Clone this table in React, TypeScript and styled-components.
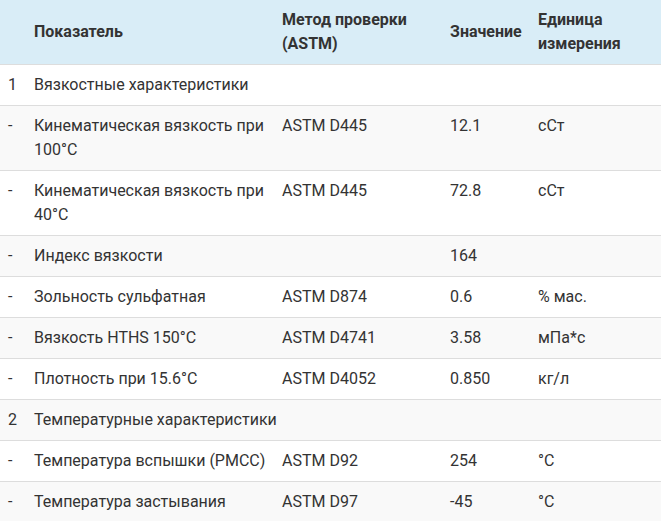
import React from 'react';
import styled, {createGlobalStyle} from "styled-components";

const GlobalStyle = createGlobalStyle`
  html, body {
    margin: 0;
    padding: 0;
    background: #fff;
  }
  body {
    font-family: Roboto, "Liberation Sans", sans-serif;
  }
  * {
    box-sizing: border-box;
  }
`

const StyledTable = styled.table`
  width: 661px;
  border-collapse: collapse;
  table-layout: fixed;
  font-size: 16px;
  line-height: 24px;
  color: #333;
`
const StyledHeadRow = styled.tr`
  background: #d9edf7;
`
const StyledTh = styled.th<{ $width: number }>`
  width: ${p => p.$width}px;
  padding: 8px;
  text-align: left;
  vertical-align: middle;
  font-weight: 700;
  border-bottom: 1px solid #ddd;
`
const StyledRow = styled.tr`
  &:nth-child(even) {
    background: #f9f9f9;
  }
`
const StyledTd = styled.td`
  padding: 8px;
  vertical-align: top;
  border-top: 1px solid #ddd;
`

interface RowInterface {
    num: string,
    name: string,
    method?: string,
    value?: string,
    unit?: string,
    section?: boolean
}

const rows: RowInterface[] = [
    {num: "1", name: "Вязкостные характеристики", section: true},
    {num: "-", name: "Кинематическая вязкость при 100°C", method: "ASTM D445", value: "12.1", unit: "сСт"},
    {num: "-", name: "Кинематическая вязкость при 40°C", method: "ASTM D445", value: "72.8", unit: "сСт"},
    {num: "-", name: "Индекс вязкости", value: "164"},
    {num: "-", name: "Зольность сульфатная", method: "ASTM D874", value: "0.6", unit: "% мас."},
    {num: "-", name: "Вязкость HTHS 150°C", method: "ASTM D4741", value: "3.58", unit: "мПа*с"},
    {num: "-", name: "Плотность при 15.6°C", method: "ASTM D4052", value: "0.850", unit: "кг/л"},
    {num: "2", name: "Температурные характеристики", section: true},
    {num: "-", name: "Температура вспышки (PMCC)", method: "ASTM D92", value: "254", unit: "°C"},
    {num: "-", name: "Температура застывания", method: "ASTM D97", value: "-45", unit: "°C"},
]

function App() {
    return (
        <>
            <GlobalStyle/>
            <StyledTable>
                <thead>
                <StyledHeadRow>
                    <StyledTh $width={26}/>
                    <StyledTh $width={248}>Показатель</StyledTh>
                    <StyledTh $width={168}>Метод проверки (ASTM)</StyledTh>
                    <StyledTh $width={88}>Значение</StyledTh>
                    <StyledTh $width={131}>Единица измерения</StyledTh>
                </StyledHeadRow>
                </thead>
                <tbody>
                {rows.map((row, i) => (
                    <StyledRow key={i}>
                        <StyledTd>{row.num}</StyledTd>
                        {row.section
                            ? <StyledTd colSpan={4}>{row.name}</StyledTd>
                            : <>
                                <StyledTd>{row.name}</StyledTd>
                                <StyledTd>{row.method}</StyledTd>
                                <StyledTd>{row.value}</StyledTd>
                                <StyledTd>{row.unit}</StyledTd>
                            </>}
                    </StyledRow>
                ))}
                </tbody>
            </StyledTable>
        </>
    );
}

export default App;
